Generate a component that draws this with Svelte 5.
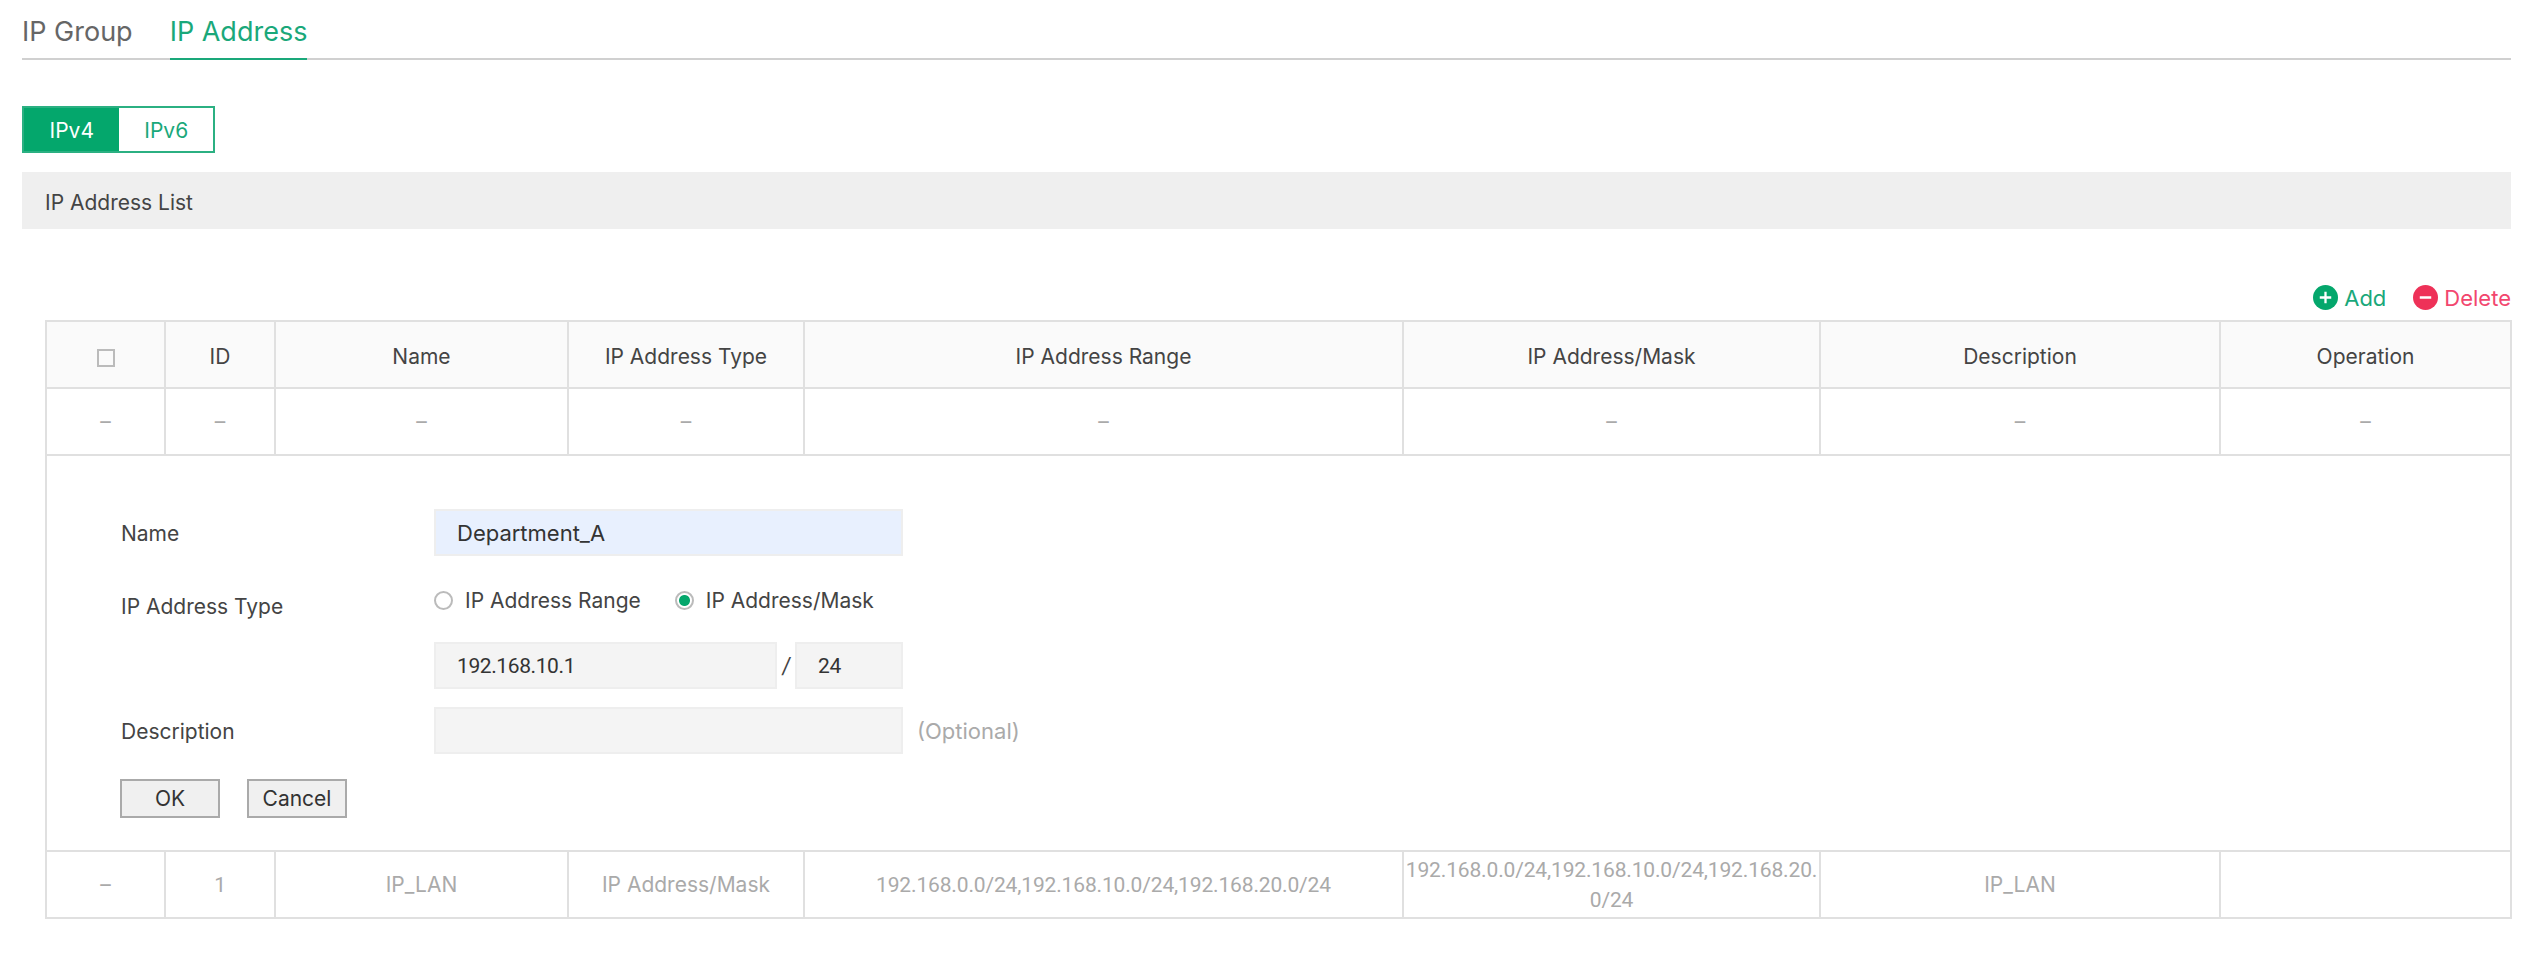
<script>
	let ipType = $state('mask');

	const columns = [
		{ label: 'ID', width: 110 },
		{ label: 'Name', width: 293 },
		{ label: 'IP Address Type', width: 236 },
		{ label: 'IP Address Range', width: 599 },
		{ label: 'IP Address/Mask', width: 417 },
		{ label: 'Description', width: 400 },
		{ label: 'Operation', width: 291 }
	];
</script>

<div class="page">
	<nav class="tabs">
		<span class="tab">IP Group</span>
		<span class="tab active">IP Address</span>
	</nav>

	<div class="toggle">
		<span class="seg on">IPv4</span>
		<span class="seg">IPv6</span>
	</div>

	<div class="section">IP Address List</div>

	<div class="actions">
		<span class="action add">
			<svg viewBox="0 0 24 24" width="25" height="25">
				<circle cx="12" cy="12" r="12" fill="#04a76c" />
				<path d="M12 6.5v11M6.5 12h11" stroke="#fff" stroke-width="2.2" />
			</svg>
			Add
		</span>
		<span class="action del">
			<svg viewBox="0 0 24 24" width="25" height="25">
				<circle cx="12" cy="12" r="12" fill="#ee3158" />
				<path d="M6.5 12h11" stroke="#fff" stroke-width="2.4" />
			</svg>
			Delete
		</span>
	</div>

	<table>
		<colgroup>
			<col style="width: 119px" />
			{#each columns as c}
				<col style="width: {c.width}px" />
			{/each}
		</colgroup>
		<thead>
			<tr>
				<th><span class="check"></span></th>
				{#each columns as c}
					<th>{c.label}</th>
				{/each}
			</tr>
		</thead>
		<tbody>
			<tr class="muted">
				<td>–</td>
				{#each columns as c}
					<td>–</td>
				{/each}
			</tr>
			<tr>
				<td colspan="8" class="panel">
					<form class="form" onsubmit={(e) => e.preventDefault()}>
						<div class="row">
							<span class="label">Name</span>
							<input class="field name" value="Department_A" />
						</div>
						<div class="row radios">
							<span class="label low">IP Address Type</span>
							<button type="button" class="radio" onclick={() => (ipType = 'range')}>
								<span class="dot" class:sel={ipType === 'range'}></span>IP Address Range
							</button>
							<button type="button" class="radio" onclick={() => (ipType = 'mask')}>
								<span class="dot" class:sel={ipType === 'mask'}></span>IP Address/Mask
							</button>
						</div>
						<div class="row">
							<span class="label"></span>
							<input class="field ip num" value="192.168.10.1" />
							<span class="slash">/</span>
							<input class="field mask num" value="24" />
						</div>
						<div class="row desc">
							<span class="label">Description</span>
							<input class="field wide" />
							<span class="hint">(Optional)</span>
						</div>
						<div class="buttons">
							<button type="submit" class="btn">OK</button>
							<button type="button" class="btn">Cancel</button>
						</div>
					</form>
				</td>
			</tr>
			<tr class="muted">
				<td>–</td>
				<td class="num">1</td>
				<td>IP_LAN</td>
				<td>IP Address/Mask</td>
				<td class="num">192.168.0.0/24,192.168.10.0/24,192.168.20.0/24</td>
				<td class="num wrap">192.168.0.0/24,192.168.10.0/24,192.168.20.<br />0/24</td>
				<td>IP_LAN</td>
				<td></td>
			</tr>
		</tbody>
	</table>
</div>

<style>
	:global(body) {
		margin: 0;
		background: #fff;
	}
	.page {
		padding: 0 26px 34px 22px;
		font-family: Inter, 'Noto Sans', sans-serif;
		font-size: 21px;
		color: #444;
	}
	.tabs {
		display: flex;
		gap: 37px;
		height: 58px;
		border-bottom: 2px solid #d0d0d0;
	}
	.tab {
		font-size: 27px;
		line-height: 63px;
		height: 58px;
		color: #666;
	}
	.tab.active {
		color: #1aa87a;
		border-bottom: 2px solid #1aa87a;
	}
	.toggle {
		display: flex;
		width: 193px;
		height: 47px;
		margin-top: 46px;
		box-sizing: border-box;
		border: 2px solid #2bb082;
	}
	.seg {
		width: 95px;
		line-height: 45px;
		text-align: center;
		color: #1aa87a;
	}
	.seg.on {
		width: 97px;
		background: #04a76c;
		color: #fff;
	}
	.section {
		height: 57px;
		line-height: 62px;
		margin-top: 19px;
		padding-left: 23px;
		background: #efefef;
		color: #444;
	}
	.actions {
		display: flex;
		justify-content: flex-end;
		gap: 27px;
		margin-top: 55px;
		height: 36px;
		font-size: 22px;
	}
	.action {
		display: flex;
		align-items: center;
		gap: 6px;
		height: 27px;
	}
	.add {
		color: #1aa87a;
	}
	.del {
		color: #f2466e;
	}
	table {
		width: 2466px;
		margin-left: 23px;
		border-collapse: collapse;
		table-layout: fixed;
	}
	th,
	td {
		height: 65px;
		padding: 0;
		border: 2px solid #e0e0e0;
		text-align: center;
		font-weight: 400;
	}
	th {
		height: 62px;
		padding-top: 3px;
		background: #fafafa;
		color: #444;
	}
	.muted td {
		color: #aaa;
	}
	.num {
		font-family: Roboto, sans-serif;
		letter-spacing: -0.15px;
	}
	.wrap {
		line-height: 30px;
	}
	.check {
		display: inline-block;
		width: 18px;
		height: 18px;
		box-sizing: border-box;
		border: 2px solid #bbb;
		vertical-align: middle;
	}
	td.panel {
		height: auto;
		text-align: left;
		padding: 53px 0 32px 74px;
	}
	.form {
		display: flex;
		flex-direction: column;
	}
	.row {
		display: flex;
		align-items: center;
	}
	.label {
		width: 313px;
		flex: none;
		padding-top: 2px;
	}
	.label.low {
		padding-top: 11px;
	}
	.field {
		height: 47px;
		box-sizing: border-box;
		padding: 0 21px;
		border: 2px solid #eee;
		background: #f4f4f4;
		font: inherit;
		color: #333;
		outline: none;
	}
	.field.num {
		font-family: Roboto, sans-serif;
		letter-spacing: -0.4px;
	}
	.name {
		width: 469px;
		font-size: 22px;
		background: #e8f0fe;
	}
	.radios {
		margin: 22px 0 19px;
		height: 45px;
	}
	.radio {
		display: flex;
		align-items: center;
		gap: 12px;
		padding: 0;
		margin-right: 34px;
		border: 0;
		background: none;
		font: inherit;
		color: #444;
	}
	.dot {
		width: 19px;
		height: 19px;
		box-sizing: border-box;
		border: 2px solid #bbb;
		border-radius: 50%;
		background: #fff;
	}
	.dot.sel {
		background: radial-gradient(circle, #04a76c 0 5px, #fff 6px);
	}
	.ip {
		width: 343px;
	}
	.slash {
		width: 18px;
		text-align: center;
		font-style: italic;
	}
	.mask {
		width: 108px;
	}
	.desc {
		margin-top: 18px;
	}
	.wide {
		width: 469px;
	}
	.hint {
		margin-left: 14px;
		font-size: 22px;
		color: #aaa;
	}
	.buttons {
		display: flex;
		gap: 27px;
		margin-top: 25px;
		margin-left: -1px;
	}
	.btn {
		width: 100px;
		height: 39px;
		padding: 0;
		box-sizing: border-box;
		border: 2px solid #aaa;
		background: #f0f0f0;
		font: inherit;
		color: #333;
	}
</style>
